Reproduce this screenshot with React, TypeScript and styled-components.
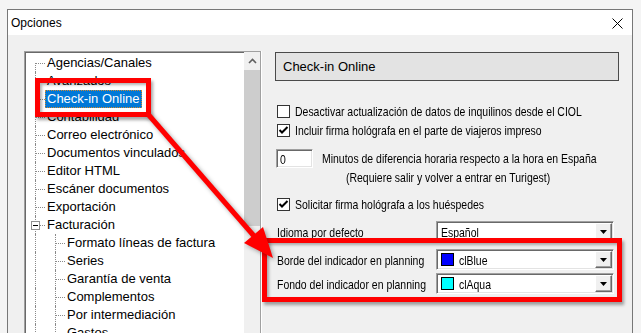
import * as React from 'react';
import styled, { createGlobalStyle } from 'styled-components';

interface TreeItem {
  label: string;
  level: number;
  selected?: boolean;
  expanded?: boolean;
}

const treeItems: TreeItem[] = [
  { label: 'Agencias/Canales', level: 0 },
  { label: 'Avanzados', level: 0 },
  { label: 'Check-in Online', level: 0, selected: true },
  { label: 'Contabilidad', level: 0 },
  { label: 'Correo electrónico', level: 0 },
  { label: 'Documentos vinculados', level: 0 },
  { label: 'Editor HTML', level: 0 },
  { label: 'Escáner documentos', level: 0 },
  { label: 'Exportación', level: 0 },
  { label: 'Facturación', level: 0, expanded: true },
  { label: 'Formato líneas de factura', level: 1 },
  { label: 'Series', level: 1 },
  { label: 'Garantía de venta', level: 1 },
  { label: 'Complementos', level: 1 },
  { label: 'Por intermediación', level: 1 },
  { label: 'Gastos', level: 1 },
];

/** 창 전체 */
const App = () => {
  return (
    <>
      <GlobalStyle />
      <Screen>
        <Dialog>
          <TitleBar>
            <Title>Opciones</Title>
            <CloseButton>
              <svg width="11" height="11" viewBox="0 0 11 11">
                <path d="M0.5 0.5 L10.5 10.5 M10.5 0.5 L0.5 10.5" stroke="#000" strokeWidth="1" />
              </svg>
            </CloseButton>
          </TitleBar>
          <Body>
            <Tree>
              <TreeList>
                {treeItems.map((item, index) => (
                  <TreeRow key={item.label}>
                    <Guide $branch={item.level === 0} $first={index === 0} />
                    {item.level > 0 && <Guide $branch />}
                    {item.expanded && <Expander />}
                    <TreeLabel $selected={item.selected}>{item.label}</TreeLabel>
                  </TreeRow>
                ))}
              </TreeList>
              <Scrollbar>
                <ScrollButton>
                  <svg width="9" height="6" viewBox="0 0 9 6">
                    <path d="M1 5 L4.5 1.5 L8 5" stroke="#606060" strokeWidth="1.6" fill="none" />
                  </svg>
                </ScrollButton>
                <Thumb />
              </Scrollbar>
            </Tree>

            <Panel>
              <PanelHeader>Check-in Online</PanelHeader>

              <CheckRow $top={22}>
                <CheckBox />
                <Text>Desactivar actualización de datos de inquilinos desde el CIOL</Text>
              </CheckRow>
              <CheckRow $top={3}>
                <CheckBox>
                  <CheckMark />
                </CheckBox>
                <Text>Incluir firma hológrafa en el parte de viajeros impreso</Text>
              </CheckRow>

              <MinutesRow>
                <NumberBox>
                  <Text>0</Text>
                </NumberBox>
                <Note>
                  <Text>Minutos de diferencia horaria respecto a la hora en España</Text>
                  <NoteSecond>(Requiere salir y volver a entrar en Turigest)</NoteSecond>
                </Note>
              </MinutesRow>

              <CheckRow $top={9}>
                <CheckBox>
                  <CheckMark />
                </CheckBox>
                <Text>Solicitar firma hológrafa a los huéspedes</Text>
              </CheckRow>

              <FieldRow $top={9}>
                <FieldLabel>
                  <Text>Idioma por defecto</Text>
                </FieldLabel>
                <Combo>
                  <ComboText>
                    <Text>Español</Text>
                  </ComboText>
                  <DropButton />
                </Combo>
              </FieldRow>
              <FieldRow $top={7}>
                <FieldLabel>
                  <Text>Borde del indicador en planning</Text>
                </FieldLabel>
                <Combo>
                  <Swatch $color="#0000ff" />
                  <ComboText>
                    <Text>clBlue</Text>
                  </ComboText>
                  <DropButton />
                </Combo>
              </FieldRow>
              <FieldRow $top={3}>
                <FieldLabel>
                  <Text>Fondo del indicador en planning</Text>
                </FieldLabel>
                <Combo>
                  <Swatch $color="#00ffff" />
                  <ComboText>
                    <Text>clAqua</Text>
                  </ComboText>
                  <DropButton />
                </Combo>
              </FieldRow>
            </Panel>
          </Body>
        </Dialog>

        <RedFrame $x={35} $y={78} $w={116} $h={39} />
        <RedFrame $x={262} $y={238} $w={360} $h={64} />
        <Arrow width="641" height="333" viewBox="0 0 641 333">
          <line x1="147" y1="113" x2="254" y2="236" stroke="#ff0000" strokeWidth="5" />
          <polygon points="273,258 244,243 263,227" fill="#ff0000" />
        </Arrow>
      </Screen>
    </>
  );
};

const CheckMark = () => (
  <svg width="11" height="11" viewBox="0 0 11 11">
    <path d="M1.5 5 L4 7.5 L9.5 2" stroke="#000" strokeWidth="2" fill="none" />
  </svg>
);

const DropButton = () => (
  <DropBox>
    <svg width="7" height="4" viewBox="0 0 7 4">
      <polygon points="0,0 7,0 3.5,4" fill="#000" />
    </svg>
  </DropBox>
);

const GlobalStyle = createGlobalStyle`
  html, body {
    margin: 0;
    padding: 0;
    background: #f4f4f4;
  }
  * {
    box-sizing: border-box;
  }
`;

const Screen = styled.div`
  position: relative;
  width: 641px;
  height: 333px;
  overflow: hidden;
  padding: 9px 0 0 7px;
  background: #f4f4f4;
  font-family: 'Liberation Sans', Arial, sans-serif;
`;

const Dialog = styled.div`
  display: flex;
  flex-direction: column;
  width: 626px;
  height: 340px;
  border: 1px solid #777;
  background: #f0f0f0;
`;

const TitleBar = styled.div`
  display: flex;
  align-items: center;
  justify-content: space-between;
  height: 25px;
  padding-left: 3px;
  background: #fff;
`;

const Title = styled.span`
  font-size: 12px;
  color: #000;
`;

const CloseButton = styled.div`
  display: flex;
  align-items: center;
  justify-content: center;
  width: 30px;
  height: 25px;
  padding-top: 1px;
`;

const Body = styled.div`
  display: flex;
  padding: 16px 0 0 16px;
`;

const Tree = styled.div`
  display: flex;
  flex: none;
  width: 237px;
  height: 300px;
  border: 1px solid #a0a0a0;
  background: #fff;
  box-shadow: inset 1px 1px 0 #696969, 1px 0 0 #fff;
`;

const TreeList = styled.div`
  flex: 1;
  padding: 2px 0 0 1px;
  overflow: hidden;
`;

const TreeRow = styled.div`
  position: relative;
  display: flex;
  align-items: center;
  height: 18px;
  font-size: 13px;
  color: #000;
  white-space: nowrap;
`;

const Guide = styled.span<{ $branch?: boolean; $first?: boolean }>`
  position: relative;
  flex: none;
  width: 20px;
  height: 18px;

  &::before {
    content: '';
    position: absolute;
    left: 9px;
    top: ${(p) => (p.$first ? '9px' : '0')};
    bottom: 0;
    border-left: 1px dotted #8a8a8a;
  }

  &::after {
    content: '';
    display: ${(p) => (p.$branch ? 'block' : 'none')};
    position: absolute;
    left: 10px;
    top: 9px;
    width: 9px;
    border-top: 1px dotted #8a8a8a;
  }
`;

const Expander = styled.span`
  position: absolute;
  left: 5px;
  top: 5px;
  width: 9px;
  height: 9px;
  border: 1px solid #919191;
  background: #fff;

  &::after {
    content: '';
    position: absolute;
    left: 1px;
    top: 3px;
    width: 5px;
    height: 1px;
    background: #000;
  }
`;

const TreeLabel = styled.span<{ $selected?: boolean }>`
  height: 18px;
  line-height: 18px;
  padding: 0 2px;
  margin-left: -1px;
  background: ${(p) => (p.$selected ? '#0078d7' : 'transparent')};
  color: ${(p) => (p.$selected ? '#fff' : '#000')};
  outline: ${(p) => (p.$selected ? '1px dotted #d08a30' : 'none')};
  outline-offset: -1px;
`;

const Scrollbar = styled.div`
  display: flex;
  flex-direction: column;
  flex: none;
  width: 16px;
  background: #f0f0f0;
`;

const ScrollButton = styled.div`
  display: flex;
  align-items: center;
  justify-content: center;
  height: 18px;
`;

const Thumb = styled.div`
  height: 156px;
  background: #cdcdcd;
`;

const Panel = styled.div`
  display: flex;
  flex-direction: column;
  flex: none;
  margin-left: 14px;
  width: 344px;
`;

const PanelHeader = styled.div`
  display: flex;
  align-items: center;
  height: 29px;
  margin-top: 1px;
  padding-left: 7px;
  border: 1px solid #4a4a4a;
  background: #e3e3e3;
  font-size: 13px;
  color: #000;
`;

/* 참조 화면의 좁은 글꼴 폭에 맞춤 */
const Text = styled.span`
  display: inline-block;
  font-size: 13px;
  color: #000;
  white-space: nowrap;
  transform: scaleX(0.805);
  transform-origin: left center;
`;

const CheckRow = styled.div<{ $top: number }>`
  display: flex;
  align-items: center;
  gap: 5px;
  height: 16px;
  margin-top: ${(p) => p.$top}px;
  padding-left: 2px;
`;

const CheckBox = styled.span`
  display: flex;
  flex: none;
  align-items: center;
  justify-content: center;
  width: 13px;
  height: 13px;
  border: 1px solid #333;
  background: #fff;
`;

const MinutesRow = styled.div`
  display: flex;
  gap: 9px;
  margin-top: 11px;
  padding-left: 1px;
`;

const NumberBox = styled.div`
  flex: none;
  width: 37px;
  height: 19px;
  padding: 0 0 0 3px;
  border: 1px solid;
  border-color: #a0a0a0 #fff #fff #a0a0a0;
  box-shadow: inset 1px 1px 0 #696969, inset -1px -1px 0 #e3e3e3;
  background: #fff;
  line-height: 17px;
`;

const Note = styled.div`
  display: flex;
  flex-direction: column;
  line-height: 19px;
`;

const NoteSecond = styled(Text)`
  margin-left: 24px;
`;

const FieldRow = styled.div<{ $top: number }>`
  display: flex;
  align-items: center;
  margin-top: ${(p) => p.$top}px;
  padding-left: 2px;
`;

const FieldLabel = styled.div`
  flex: none;
  width: 159px;
`;

const Combo = styled.div`
  display: flex;
  flex: none;
  align-items: center;
  width: 178px;
  height: 21px;
  padding-left: 4px;
  border: 1px solid;
  border-color: #a0a0a0 #fff #fff #a0a0a0;
  box-shadow: inset 1px 1px 0 #696969, inset -1px -1px 0 #e3e3e3;
  background: #fff;
`;

const Swatch = styled.span<{ $color: string }>`
  flex: none;
  width: 13px;
  height: 13px;
  margin-right: 5px;
  border: 1px solid #000;
  background: ${(p) => p.$color};
`;

const ComboText = styled.div`
  flex: 1;
  overflow: hidden;
`;

const DropBox = styled.span`
  display: flex;
  flex: none;
  align-items: center;
  justify-content: center;
  width: 17px;
  height: 17px;
  margin-right: 1px;
  border: 1px solid;
  border-color: #fff #696969 #696969 #fff;
  box-shadow: inset -1px -1px 0 #a0a0a0;
  background: #f0f0f0;
`;

const RedFrame = styled.div<{ $x: number; $y: number; $w: number; $h: number }>`
  position: absolute;
  left: ${(p) => p.$x}px;
  top: ${(p) => p.$y}px;
  width: ${(p) => p.$w}px;
  height: ${(p) => p.$h}px;
  border: 5px solid #ff0000;
  box-shadow: 2px 3px 3px rgba(0, 0, 0, 0.35), inset 2px 2px 3px rgba(0, 0, 0, 0.3);
`;

const Arrow = styled.svg`
  position: absolute;
  left: 0;
  top: 0;
  pointer-events: none;
  filter: drop-shadow(2px 2px 2px rgba(0, 0, 0, 0.35));
`;

export default App;
